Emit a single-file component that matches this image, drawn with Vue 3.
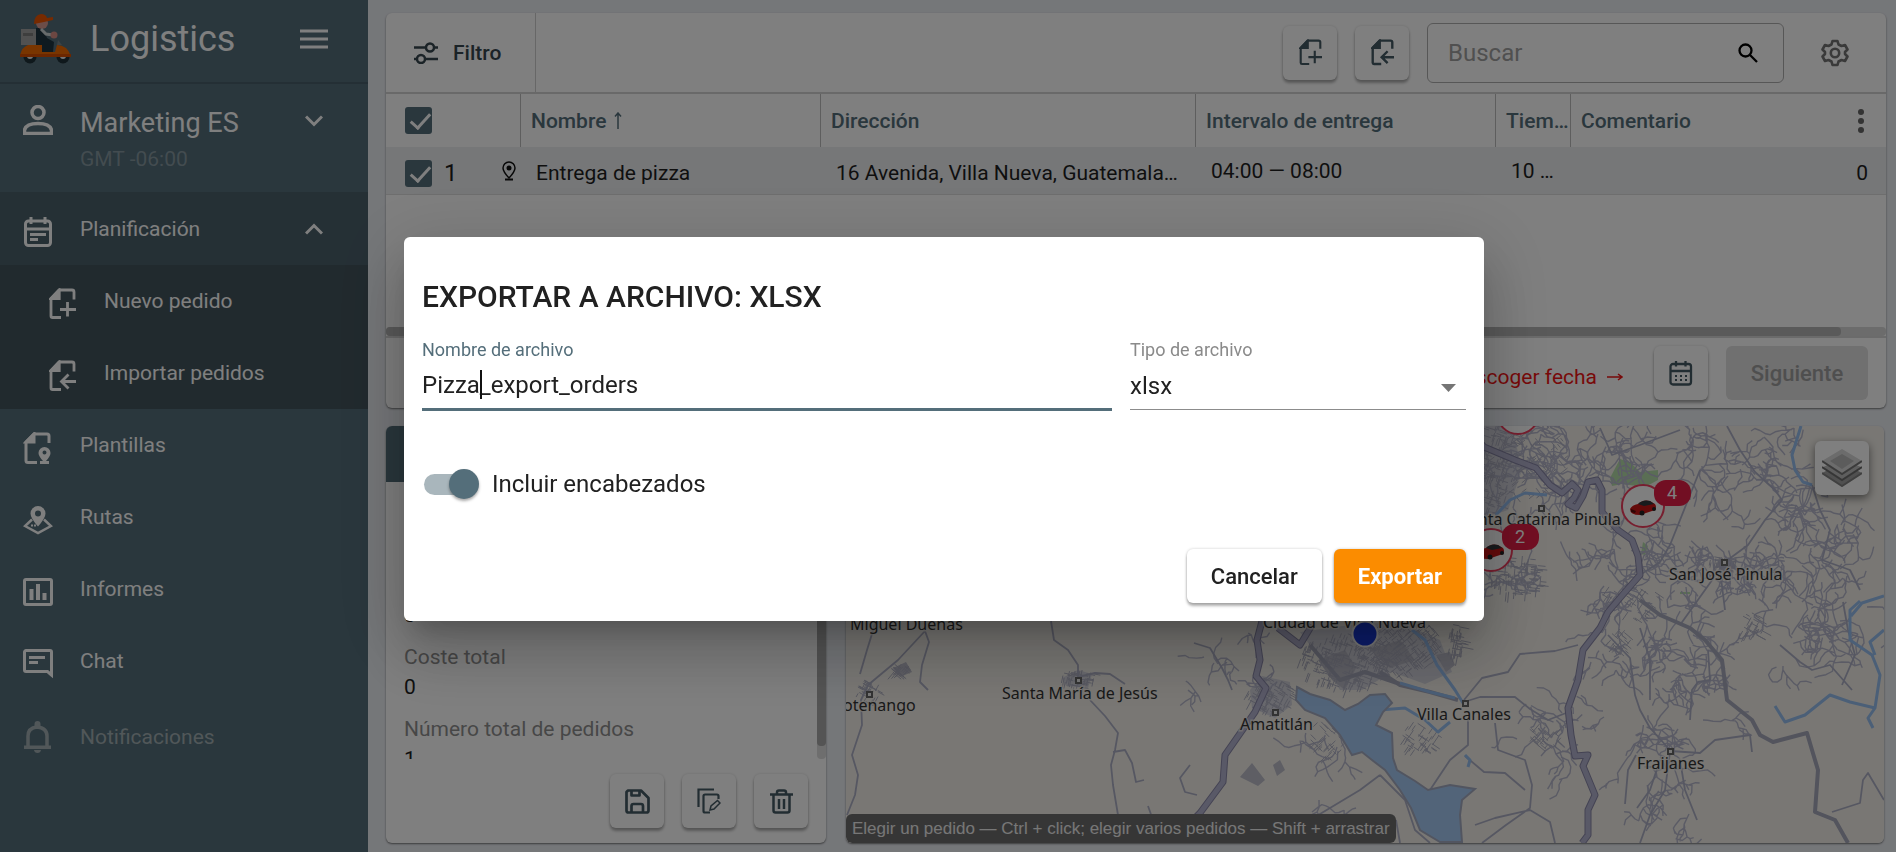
<script setup>
import { ref } from 'vue'

const icons = {
  docPlus: 'M6 29H3.5A1.5 1.5 0 0 1 2 27.500V10L10 1.500H23A2 2 0 0 1 25 3.500V11 M2 10H10V2 M6 29H12 M18.500 13.500V28 M11 21H27',
  docImport: 'M6 29H3.5A1.5 1.5 0 0 1 2 27.500V10L10 1.500H23A2 2 0 0 1 25 3.500V11 M2 10H10V2 M6 29H12 M12 21H27 M19.500 14L12.500 21L19.500 28',
}

const columns = ['Nombre', 'Dirección', 'Intervalo de entrega', 'Tiem…', 'Comentario']
const fileName = ref('Pizza_export_orders')
const fileType = ref('xlsx')
const withHeaders = ref(true)
const search = ref('')

let seed = 7
function rnd() {
  seed = (seed * 16807) % 2147483647
  return seed / 2147483647
}

// Winding side road that forks as it goes.
function road(x, y, angle, steps, out, depth = 0) {
  let d = `M${Math.round(x)} ${Math.round(y)}`
  for (let i = 0; i < steps; i++) {
    angle += (rnd() - 0.5) * 1.8
    const len = 3 + rnd() * 5
    x += Math.cos(angle) * len
    y += Math.sin(angle) * len
    d += `L${x.toFixed(1)} ${y.toFixed(1)}`
    if (depth < 2 && rnd() < 0.28) {
      road(x, y, angle + (rnd() < 0.5 ? -1.3 : 1.3), Math.round(steps * 0.5), out, depth + 1)
    }
  }
  out.push(d)
}

function network(areas) {
  const out = []
  for (const [x, y, w, h, n, steps] of areas) {
    for (let i = 0; i < n; i++) {
      road(x + rnd() * w, y + rnd() * h, rnd() * 6.28, steps, out)
    }
  }
  return out.join('')
}

// Short crossing streets of built-up places.
function streets(areas) {
  let d = ''
  for (const [cx, cy, rx, ry, n, tilt] of areas) {
    for (let i = 0; i < n; i++) {
      const t = rnd() * 6.28
      const r = Math.sqrt(rnd())
      const x = cx + Math.cos(t) * r * rx
      const y = cy + Math.sin(t) * r * ry
      const a = tilt + (rnd() < 0.5 ? 0 : 1.57)
      const l = 4 + rnd() * 7
      d += `M${x.toFixed(1)} ${y.toFixed(1)}l${(Math.cos(a) * l).toFixed(1)} ${(Math.sin(a) * l).toFixed(1)}`
    }
  }
  return d
}

const sideRoads = network([
  [1490, 430, 150, 60, 26, 9],
  [1650, 430, 90, 60, 9, 9],
  [1730, 430, 60, 50, 6, 8],
  [1600, 520, 130, 80, 20, 9],
  [1740, 480, 120, 110, 20, 9],
  [1510, 520, 80, 80, 9, 8],
  [1780, 590, 90, 80, 14, 9],
  [1600, 610, 110, 90, 16, 8],
  [1630, 690, 80, 80, 11, 8],
  [1640, 770, 60, 55, 5, 8],
  [1500, 700, 80, 60, 8, 7],
  [1290, 740, 70, 80, 7, 7],
  [1200, 650, 70, 60, 8, 5],
  [1590, 660, 20, 60, 6, 4],
])

const thinStreets = streets([
  [1490, 450, 28, 60, 200, 0.3],
  [1530, 460, 40, 40, 70, 0.9],
  [1515, 575, 28, 20, 100, 0.1],
  [1630, 600, 30, 20, 40, 0.6],
  [1724, 563, 16, 9, 30, 0.2],
  [1345, 660, 45, 28, 230, 0.35],
  [1400, 645, 42, 28, 240, 0.9],
  [1270, 695, 22, 18, 90, 0.5],
  [1078, 678, 17, 10, 45, 0.2],
  [868, 690, 12, 12, 34, 0.5],
  [900, 668, 10, 6, 26, 0.7],
  [1420, 735, 20, 16, 40, 0.6],
  [1330, 738, 20, 20, 40, 0.8],
  [1620, 640, 12, 12, 30, 0.7],
  [1752, 625, 12, 16, 30, 0.5],
  [1545, 735, 20, 12, 30, 0.7],
  [1456, 640, 8, 18, 40, 0.2],
])

const places = [
  { x: 850, y: 630, name: 'Miguel Dueñas' },
  { x: 843, y: 711, name: 'otenango' },
  { x: 1002, y: 699, name: 'Santa María de Jesús' },
  { x: 1240, y: 730, name: 'Amatitlán' },
  { x: 1263, y: 628, name: 'Ciudad de Villa Nueva' },
  { x: 1417, y: 720, name: 'Villa Canales' },
  { x: 1637, y: 769, name: 'Fraijanes' },
  { x: 1460, y: 525, name: 'Santa Catarina Pinula' },
  { x: 1669, y: 580, name: 'San José Pinula' },
]
const towns = [[869, 694], [1078, 680], [1275, 712], [1465, 703], [1670, 751], [1541, 508], [1724, 562]]
const clusters = [
  { x: 1643, y: 506, count: 4 },
  { x: 1491, y: 550, count: 2 },
]
</script>

<template>
  <div class="app">
    <aside class="sidebar">
      <header class="brand">
        <svg class="scooter" viewBox="0 0 52 50" aria-hidden="true">
          <circle cx="10" cy="43" r="6.500" fill="#1e3038" /><circle cx="43" cy="43" r="6.500" fill="#1e3038" />
          <circle cx="10" cy="42" r="3" fill="#e8e8e8" /><circle cx="43" cy="42" r="3" fill="#e8e8e8" />
          <path d="M0 41Q2 33 8 31H22L25 38H35L37 31Q47 31 51 42H0Z" fill="#f26a00" />
          <path d="M0 40H51V43H0Z" fill="#d94e00" />
          <rect x="1" y="15" width="15" height="16" fill="#a2a2a2" /><rect x="3" y="19" width="10" height="3" fill="#7c7c7c" />
          <path d="M16 14L23 14L27 24L34 28L33 38H22V31H16Z" fill="#1e3440" />
          <circle cx="22" cy="9" r="6" fill="#d99a90" />
          <path d="M14 10Q14 1 21 0Q26 0 27 4L33 3L33 6L24 8Z" fill="#ee5400" />
          <path d="M21 15L26 20L33 21" fill="none" stroke="#cfd6d8" stroke-width="3" />
          <circle cx="34" cy="21" r="3.500" fill="#d98e84" />
          <path d="M38 26L42 31H37Z" fill="#76868c" />
        </svg>
        <h1>Logistics</h1>
        <button class="plain" aria-label="Menú">
          <svg width="28" height="20" viewBox="0 0 28 20"><path d="M0 2H28M0 10H28M0 18H28" stroke="currentColor" stroke-width="3" /></svg>
        </button>
      </header>

      <section class="account">
        <svg width="30" height="30" viewBox="0 0 30 30" fill="none" stroke="currentColor" stroke-width="3.500"><circle cx="15" cy="7.500" r="6" /><path d="M1.500 28.500V25Q3 18.500 15 18.500Q27 18.500 28.500 25V28.500Z" /></svg>
        <div>
          <strong>Marketing ES</strong>
          <small>GMT -06:00</small>
        </div>
        <button class="plain" aria-label="Cuenta">
          <svg width="18" height="12" viewBox="0 0 18 12"><path d="M1 1.500L9 9.500L17 1.500" fill="none" stroke="currentColor" stroke-width="3" /></svg>
        </button>
      </section>

      <nav>
        <a href="#" class="item open">
          <svg width="30" height="30" viewBox="0 0 30 30" fill="none" stroke="currentColor" stroke-width="3"><rect x="2.500" y="4" width="25" height="24.500" rx="3" /><path d="M3 12H27M8 0V7M22 0V7" /><path d="M7 17.500H23M7 22.500H15" /></svg>
          <span>Planificación</span>
          <svg class="chev" width="18" height="12" viewBox="0 0 18 12"><path d="M1 10.500L9 2.500L17 10.500" fill="none" stroke="currentColor" stroke-width="3" /></svg>
        </a>
        <div class="sub">
          <a href="#" class="item"><svg width="27" height="32" viewBox="0 0 27 31" fill="none" stroke="currentColor" stroke-width="2.800"><path d="M2 10L10 2V10Z" fill="currentColor" /><path :d="icons.docPlus" /></svg><span>Nuevo pedido</span></a>
          <a href="#" class="item"><svg width="27" height="32" viewBox="0 0 27 31" fill="none" stroke="currentColor" stroke-width="2.800"><path d="M2 10L10 2V10Z" fill="currentColor" /><path :d="icons.docImport" /></svg><span>Importar pedidos</span></a>
        </div>
        <a href="#" class="item">
          <svg width="30" height="32" viewBox="0 0 30 32" fill="none" stroke="currentColor" stroke-width="3"><path d="M3 10L11 2V10Z" fill="currentColor" /><path d="M14 30.500H5A2 2 0 0 1 3 28.500V10L11 2H24A2 2 0 0 1 26 4V11" /><path fill-rule="evenodd" stroke="none" fill="currentColor" d="M21.500 15A6 6 0 0 0 15.500 21Q15.500 24 20 29H17V32H26V29H23Q27.500 24 27.500 21A6 6 0 0 0 21.500 15ZM21.500 18.500A2 2 0 1 1 21.500 22.500A2 2 0 1 1 21.500 18.500Z" /></svg>
          <span>Plantillas</span>
        </a>
        <a href="#" class="item">
          <svg width="30" height="29" viewBox="0 0 30 29"><path d="M9 13.500L2 20L15 27L28 20L21 13.500" fill="none" stroke="currentColor" stroke-width="2.500" /><path d="M8 19.500H13" stroke="currentColor" stroke-width="2" stroke-dasharray="2 1" /><path fill-rule="evenodd" fill="currentColor" d="M15 0A7.500 7.500 0 0 0 7.500 7.500Q7.500 12 15 20.500Q22.500 12 22.500 7.500A7.500 7.500 0 0 0 15 0ZM15 4.500A3 3 0 1 1 15 10.500A3 3 0 1 1 15 4.500Z" /></svg>
          <span>Rutas</span>
        </a>
        <a href="#" class="item">
          <svg width="30" height="28" viewBox="0 0 30 28" fill="none" stroke="currentColor"><rect x="1.500" y="1.500" width="27" height="25" rx="1.500" stroke-width="3" /><path d="M8.500 11V22M15 6V22M21.500 15V22" stroke-width="4" /></svg>
          <span>Informes</span>
        </a>
        <a href="#" class="item">
          <svg width="30" height="30" viewBox="0 0 30 30" fill="none" stroke="currentColor" stroke-width="3"><path d="M28.500 26L24.500 22.500H3A1.500 1.500 0 0 1 1.500 21V3A1.500 1.500 0 0 1 3 1.500H27A1.500 1.500 0 0 1 28.500 3Z" /><path d="M6 8.500H22M6 13.500H15" /></svg>
          <span>Chat</span>
        </a>
        <a href="#" class="item muted">
          <svg width="30" height="32" viewBox="0 0 30 32"><path d="M5 26V15Q5 7 14 6Q24 7 24 15V26" fill="none" stroke="currentColor" stroke-width="3.500" /><path d="M1 24.500H28V28H1ZM11.500 3A3 3 0 0 1 17.500 3V6H11.500ZM11 29H18Q17.500 32 14.500 32Q11.500 32 11 29Z" fill="currentColor" /></svg>
          <span>Notificaciones</span>
        </a>
      </nav>
    </aside>

    <main>
      <section class="card orders">
        <div class="toolbar">
          <button class="filter">
            <svg width="24" height="22" viewBox="0 0 24 22" fill="none" stroke="currentColor" stroke-width="2.500"><path d="M0 5.500H12M20 5.500H24M0 17H3M11 17H24" /><circle cx="16" cy="5.500" r="4" /><circle cx="7" cy="17" r="4" /></svg>
            Filtro
          </button>
          <div class="tools">
            <button class="square" aria-label="Nuevo pedido"><svg width="23" height="27" viewBox="0 0 27 31" fill="none" stroke="currentColor" stroke-width="2.500"><path d="M2 10L10 2V10Z" fill="currentColor" /><path :d="icons.docPlus" /></svg></button>
            <button class="square" aria-label="Importar pedidos"><svg width="23" height="27" viewBox="0 0 27 31" fill="none" stroke="currentColor" stroke-width="2.800"><path d="M2 10L10 2V10Z" fill="currentColor" /><path :d="icons.docImport" /></svg></button>
            <label class="search">
              <input v-model="search" type="search" placeholder="Buscar" aria-label="Buscar">
              <svg width="20" height="20" viewBox="0 0 20 20" fill="none" stroke="#000" stroke-width="2.300"><circle cx="7.500" cy="7.500" r="6" /><path d="M12 12L19 19" /></svg>
            </label>
            <button class="plain gear" aria-label="Ajustes">
              <svg width="28" height="28" viewBox="0 0 28 28" fill="none" stroke="currentColor" stroke-width="2.600" stroke-linejoin="round"><path d="M11.500 2H16.500L17.500 5.500L20.500 7L24 6L26.500 10.500L24 13V15L26.500 17.500L24 22L20.500 21L17.500 22.500L16.500 26H11.500L10.500 22.500L7.500 21L4 22L1.500 17.500L4 15V13L1.500 10.500L4 6L7.500 7L10.500 5.500Z" /><circle cx="14" cy="14" r="4.200" /></svg>
            </button>
          </div>
        </div>

        <table>
          <colgroup><col class="c-check"><col class="c-name"><col class="c-address"><col class="c-interval"><col class="c-time"><col></colgroup>
          <thead>
            <tr>
              <th><input type="checkbox" class="check" checked aria-label="Seleccionar todo"></th>
              <th v-for="(c, i) in columns" :key="c">
                <div class="head"><span>{{ c }}</span><svg v-if="i === 0" width="8" height="17" viewBox="0 0 8 17" fill="none" stroke="currentColor" stroke-width="1.500"><path d="M4 17V1M1 4.500L4 1L7 4.500" /></svg>
                  <button v-if="i === 4" class="plain dots" aria-label="Columnas"><svg width="6" height="24" viewBox="0 0 6 24" fill="currentColor"><circle cx="3" cy="3" r="3" /><circle cx="3" cy="12" r="3" /><circle cx="3" cy="21" r="3" /></svg></button>
                </div>
              </th>
            </tr>
          </thead>
          <tbody>
            <tr>
              <td class="low">
                <div class="lead"><input type="checkbox" class="check" checked aria-label="Seleccionar pedido 1"><span>1</span>
                  <svg width="14" height="20" viewBox="0 0 14 20" fill="none" stroke="#111" stroke-width="1.500"><path d="M7 17Q1 10.500 1 7A6 6 0 0 1 13 7Q13 10.500 7 17Z" /><circle cx="7" cy="7" r="2.500" fill="#111" stroke="none" /><path d="M3 18.500H11" stroke-width="2" /></svg>
                </div>
              </td>
              <td class="low">Entrega de pizza</td>
              <td class="low">16 Avenida, Villa Nueva, Guatemala…</td>
              <td>04:00 — 08:00</td>
              <td>10 …</td>
              <td class="low num">0</td>
            </tr>
          </tbody>
        </table>
        <div class="blank"></div>
        <div class="hscroll"><span></span></div>
        <footer>
          <span class="warn">Escoger fecha <svg width="16" height="8" viewBox="0 0 16 8" fill="none" stroke="currentColor" stroke-width="1.500"><path d="M0 4H15M11 1L15 4L11 7" /></svg></span>
          <button class="square" aria-label="Calendario">
            <svg width="24" height="25" viewBox="0 0 24 25" fill="none" stroke="currentColor" stroke-width="2.300"><rect x="1.500" y="3" width="20.500" height="20.500" rx="2.500" /><path d="M2 10H22M7 0V5.500M16.500 0V5.500" /><path d="M6 15H8M11 15H13M16 15H18M6 19H8M11 19H13M16 19H18" stroke-width="2" /></svg>
          </button>
          <button class="next" disabled>Siguiente</button>
        </footer>
      </section>

      <div class="lower">
        <section class="card route">
          <div class="bar"></div>
          <div class="stats">
            <dl>
              <dd>0</dd>
              <dt>Coste total</dt><dd>0</dd>
              <dt>Número total de pedidos</dt><dd>1</dd>
            </dl>
            <div class="vscroll"><span></span></div>
          </div>
          <div class="actions">
            <button class="square" aria-label="Guardar"><svg width="25" height="25" viewBox="0 0 25 25" fill="none" stroke="currentColor" stroke-width="2.700" stroke-linejoin="round"><path d="M3 1.500H16L23.500 9V21.500A2 2 0 0 1 21.500 23.500H3.500A2 2 0 0 1 1.500 21.500V3Z" /><path d="M6.500 2V6.500H14.500V2M6.500 23V17A2 2 0 0 1 8.500 15H16A2 2 0 0 1 18 17V23" /></svg></button>
            <button class="square" aria-label="Duplicar"><svg width="24" height="26" viewBox="0 0 24 26" fill="none" stroke="currentColor" stroke-width="2.200"><path d="M1.500 19V1.500H17M13 24.500H8A1.500 1.500 0 0 1 6.500 23V8A1.500 1.500 0 0 1 8 6.500H20A1.500 1.500 0 0 1 21.500 8V11" /><path d="M13 22L14 18L20.500 12.500L23 15L17 21Z" stroke-width="1.500" /></svg></button>
            <button class="square" aria-label="Eliminar"><svg width="23" height="25" viewBox="0 0 23 25" fill="none" stroke="currentColor" stroke-width="2.500"><path d="M0 5.500H23M7 5V3.500A2 2 0 0 1 9 1.500H14A2 2 0 0 1 16 3.500V5M3.500 6V21.500A2 2 0 0 0 5.500 23.500H17.500A2 2 0 0 0 19.500 21.500V6M9 10V20M14 10V20" /></svg></button>
          </div>
        </section>

        <section class="map">
          <svg class="canvas" viewBox="846 426 1038 417" preserveAspectRatio="xMidYMid slice">
            <rect x="846" y="426" width="1038" height="417" fill="#f2efe9" />
            <g fill="#d3d3dc"><path d="M1460 426H1512L1522 470L1508 510L1478 520L1460 500ZM1300 632L1350 625L1400 622L1440 640L1452 672L1425 684L1392 672L1362 690L1340 690L1325 665ZM1250 690L1262 676L1290 682L1292 705L1275 718L1252 708ZM1062 678L1078 670L1092 674L1088 688L1066 686Z" /></g>
            <g fill="#bcbcc8"><path d="M1240 777L1252 763L1265 780L1258 786ZM1273 765L1280 760L1285 770L1277 776ZM893 668L906 662L912 672L900 677ZM1715 563L1730 558L1738 568L1722 572ZM1318 660L1345 650L1356 668L1345 690L1332 680ZM1370 650L1400 640L1415 660L1390 668ZM1436 655L1450 652L1455 665L1446 672Z" /></g>
            <path fill="#b4dca8" d="M1610 478L1620 459L1630 462L1640 472L1658 470L1658 480L1645 487L1622 484L1612 486ZM1643 542L1648 546L1645 555L1641 554ZM1680 592H1690V594H1680Z" />
            <path :d="sideRoads" fill="none" stroke="#b6b7cb" stroke-width="1.400" stroke-linejoin="round" />
            <path :d="thinStreets" fill="none" stroke="#b0b1c2" stroke-width="1" />
            <g fill="none" stroke="#adafc4" stroke-width="1.800" stroke-linejoin="round">
              <path d="M876 621L867 650L860 674M925 631L898 660L868 685L861 700L862 725L852 755L858 775L855 795L847 815M925 631L929 642L922 665L920 682L928 690M1051 621L1054 640L1068 650L1078 665L1078 680M1078 677L1095 673L1110 674L1125 684M1090 700L1105 716L1118 733L1115 750L1111 765L1113 785L1118 815L1117 843M1113 752L1125 750L1132 763L1136 782L1144 780M1194 643L1210 648L1222 668L1228 680L1232 690M1190 765L1180 778L1185 792L1197 795M1148 806L1153 820L1145 830" />
              <path d="M1464 700L1482 678L1508 672L1520 654L1555 651L1578 645M1464 702L1480 697L1515 697L1530 709L1548 720L1566 713M1468 718V745L1450 760L1430 790M1495 723L1498 750L1525 760L1532 785L1530 808L1506 825L1482 843M1465 756L1484 772L1505 773L1525 790M1475 825L1495 818L1530 810L1550 822L1555 843" />
              <path d="M1608 635L1630 658L1635 695L1640 710L1650 728L1670 750M1670 751L1700 753L1715 740L1750 735L1752 752M1640 628L1650 660L1650 700M1690 720L1692 690L1698 682L1710 680L1708 650M1670 752L1665 790L1650 815L1640 843M1680 760L1685 790L1697 820M1625 804L1628 770L1636 755M1637 808L1650 790L1660 760M1380 775L1360 790L1310 820M1396 820L1400 843M1380 775L1405 800L1415 830L1430 843" />
              <path d="M1727 426L1740 450L1755 472L1775 490L1782 500L1765 520L1748 545L1725 562M1725 562L1705 590L1680 625M1812 485L1820 510L1830 530L1822 560L1850 570L1860 590M1720 570L1725 610M1640 575L1660 562L1670 545L1688 500L1700 470M1600 428L1612 455L1640 445L1680 430M1843 602L1848 630L1855 655L1842 685M1780 645L1800 662L1812 670L1830 665L1852 690M1832 812L1860 803L1863 780L1868 773L1884 800" />
            </g>
            <g fill="none" stroke="#a6a8ba" stroke-width="4" stroke-linejoin="round">
              <path d="M1640 600L1660 615L1690 628L1705 640L1722 660L1727 700L1752 720L1760 735L1773 742L1807 733L1812 750L1818 770L1815 812L1835 820L1848 843M1380 672L1400 685L1430 692L1458 700M1310 645L1340 680L1365 672L1400 684" />
            </g>
            <g fill="none" stroke="#96beef" stroke-width="3" stroke-linejoin="round">
              <path d="M1412 630L1425 640L1437 665L1455 690L1463 703M1400 683L1430 692L1455 698M1875 708L1850 702L1830 695L1805 715L1785 722L1775 706M1860 601L1850 610L1850 640L1872 655L1880 675L1875 708L1868 718L1873 728M1884 630L1870 642L1875 655M1801 426L1792 455L1795 470L1803 482L1812 485M1884 596L1862 603L1851 616M1496 515L1510 500L1525 493L1547 495M1380 710L1405 708L1425 720L1438 732L1450 722M1465 755L1470 760L1468 767" />
            </g>
            <path fill="#a5c9f3" stroke="#a4abc0" stroke-width="2" d="M1297 687L1310 694L1330 700L1345 710L1358 704L1370 695L1385 694L1392 703L1383 712L1376 725L1392 733L1393 758L1397 770L1415 781L1428 790L1450 785L1475 789L1462 800L1460 815L1462 842H1440L1420 830L1411 808L1400 790L1385 770L1372 760L1362 752L1352 755L1340 735L1325 718L1305 710L1296 700Z" />
            <g fill="none" stroke-linejoin="round">
              <g v-for="[color, width] in [['#8886a6', 7], ['#b3b2ce', 5]]" :key="color" :stroke="color" :stroke-width="width">
                <path d="M1478 440L1484 447L1515 460L1536 468L1550 485L1562 493L1572 484L1578 490L1574 498L1568 504L1576 508L1583 496L1588 482L1597 480L1602 490L1602 512L1618 530L1632 540L1638 556L1640 575L1625 592L1608 612L1600 628L1583 650L1578 680L1568 708L1571 735L1575 756L1588 755L1583 766L1595 795L1588 810V835L1582 843" />
                <path d="M1262 600V621L1257 640L1260 660L1256 676L1266 688L1255 712L1225 755L1223 782L1200 813L1170 843M1278 628L1300 645L1312 625" />
              </g>
            </g>
            <g class="towns"><rect v-for="[x, y] in towns" :key="x" :x="x - 2" :y="y - 2" width="5" height="5" /></g>
            <g class="places"><text v-for="p in places" :key="p.name" :x="p.x" :y="p.y">{{ p.name }}</text></g>
            <circle cx="1365" cy="634" r="12.500" fill="#1738d8" stroke="#eee" stroke-width="2" />
            <circle cx="1518" cy="413" r="21" fill="#fff" stroke="#ef3e5e" stroke-width="2" />
            <g v-for="c in clusters" :key="c.count">
              <circle :cx="c.x" :cy="c.y" r="21" fill="#fff" stroke="#ef3e5e" stroke-width="2" />
              <g :transform="`translate(${c.x - 13} ${c.y - 6})`">
                <path d="M0 9Q2 5 8 4Q13 -1 20 1L25 4Q27 7 25 10L10 15Q0 15 0 9Z" fill="#c91414" />
                <path d="M8 4Q13 -1 20 1L24 4L14 6Z" fill="#30363b" /><circle cx="12" cy="13" r="2.500" fill="#222" /><circle cx="24" cy="9" r="2" fill="#222" /><path d="M1 9L6 11L5 13L1 12Z" fill="#5c0808" />
              </g>
              <rect :x="c.x + 11" :y="c.y - 26" width="37" height="26" rx="12" fill="#e41e46" />
              <text class="count" :x="c.x + 29" :y="c.y - 7">{{ c.count }}</text>
            </g>
          </svg>
          <button class="layers" aria-label="Capas">
            <svg width="40" height="38" viewBox="0 0 40 38"><path d="M0 24L20 37L40 24L20 14Z" fill="#a0a0a0" /><path d="M0 24L20 37L40 24" fill="none" stroke="#808080" stroke-width="2" /><path d="M0 18L20 31L40 18L20 9Z" fill="#bdbdbd" stroke="#fff" /><path d="M0 18L20 31L40 18" fill="none" stroke="#6d6d6d" stroke-width="2" /><path d="M0 12L20 25L40 12L20 0Z" fill="#d8d8d8" /><path d="M8 12L20 5L32 12L20 20Z" fill="#b8b8b8" /><path d="M0 12L20 25L40 12" fill="none" stroke="#777" stroke-width="2" /></svg>
          </button>
          <p class="hint">Elegir un pedido — Ctrl + click; elegir varios pedidos — Shift + arrastrar</p>
        </section>
      </div>
    </main>

    <div class="overlay">
      <form class="dialog" role="dialog" aria-labelledby="export-title" @submit.prevent>
        <h2 id="export-title">EXPORTAR A ARCHIVO: XLSX</h2>
        <div class="fields">
          <div class="field active">
            <label for="file-name">Nombre de archivo</label>
            <input id="file-name" v-model="fileName" type="text">
            <span class="caret"></span>
          </div>
          <div class="field">
            <label for="file-type">Tipo de archivo</label>
            <select id="file-type" v-model="fileType"><option>xlsx</option></select>
            <svg class="arrow" width="15" height="8" viewBox="0 0 15 8"><path d="M0 0H15L7.500 8Z" fill="#757575" /></svg>
          </div>
        </div>
        <label class="switch"><input v-model="withHeaders" type="checkbox" role="switch"><span>Incluir encabezados</span></label>
        <div class="buttons">
          <button type="button">Cancelar</button>
          <button type="submit" class="primary">Exportar</button>
        </div>
      </form>
    </div>
  </div>
</template>

<style>
body { background: #ebeef3; overflow: hidden; }
</style>

<style scoped>
.app, .app * { box-sizing: border-box; }
.app {
  display: grid;
  grid-template-columns: 368px minmax(0, 1fr);
  height: 100vh;
  font-family: Roboto, "Liberation Sans", sans-serif;
  font-size: 21px;
  color: #1f1f1f;
  background: #ebeef3;
}
button, input, select { font: inherit; color: inherit; }
button { border: 0; background: none; padding: 0; }
svg { display: block; flex: none; }
h1, h2, p, dl, dd { margin: 0; }

.sidebar { background: #546e7a; color: #fff; }
.brand { display: flex; align-items: center; height: 84px; padding: 0 40px 4px 20px; border-bottom: 2px solid #485f6a; }
.scooter { width: 52px; height: 50px; }
.brand h1 { flex: 1; margin-left: 18px; font-size: 36px; font-weight: 400; }
.account { display: flex; align-items: flex-start; height: 108px; padding: 21px 45px 0 23px; }
.account div { flex: 1; margin-left: 27px; }
.account strong { display: block; font-size: 27px; font-weight: 400; line-height: 36px; }
.account small { display: block; font-size: 21px; line-height: 36px; color: #8698a0; }
.account button { margin-top: 10px; }
.item { display: flex; align-items: center; height: 72px; padding: 0 45px 0 23px; color: #fff; text-decoration: none; }
.item > svg:first-child { margin-top: 6px; }
.item span { flex: 1; margin-left: 27px; }
.item.open { height: 73px; background: #4b606b; }
.sub { background: #43545c; }
.sub .item { padding-left: 49px; }
.sub .item span { margin-left: 28px; }
.item.muted { height: 80px; color: #a2aeb3; }
.item.muted > svg:first-child { margin-top: 0; }

main { display: flex; flex-direction: column; gap: 18px; min-width: 0; padding: 13px 10px 9px 18px; }
.card { background: #fff; border-radius: 6px; box-shadow: 0 1px 2px rgba(0, 0, 0, .5); overflow: hidden; }
.toolbar { display: flex; justify-content: space-between; height: 81px; border-bottom: 2px solid #d2d2d2; }
.filter { display: flex; align-items: center; gap: 15px; width: 150px; padding: 0 28px; border-right: 1px solid #cecece; font-weight: 500; color: #37474f; }
.tools { display: flex; align-items: center; gap: 18px; padding-right: 37px; }
.square { display: flex; align-items: center; justify-content: center; width: 54px; height: 54px; border-radius: 6px; background: #fff; color: #455a64; box-shadow: 0 3px 3px rgba(0, 0, 0, .3), 0 0 3px rgba(0, 0, 0, .15); }
.search { display: flex; align-items: center; justify-content: space-between; width: 357px; height: 60px; padding: 0 25px 0 20px; border: 1px solid #aeaeae; border-radius: 6px; }
.search input { flex: 1; min-width: 0; padding: 0; border: 0; outline: 0; background: none; font-size: 24px; }
.search input::placeholder { color: #a0a0a0; opacity: 1; }
.gear { margin-left: 19px; color: #757575; }

table { width: 100%; table-layout: fixed; border-collapse: separate; border-spacing: 0; }
.c-check { width: 135px; }
.c-name, .c-interval { width: 300px; }
.c-address { width: 375px; }
.c-time { width: 75px; }
th { height: 53px; padding: 0 0 0 10px; border-right: 1px solid #bdbdbd; color: #546e7a; font-weight: 500; text-align: left; }
th:first-child { padding-left: 19px; }
th:last-child { border-right: 0; }
.head { display: flex; align-items: center; gap: 8px; }
.dots { margin: 0 22px 0 auto; color: #666; }
td { height: 48px; padding: 0 8px 0 15px; overflow: hidden; background: #eceef1; border-bottom: 1px solid #dcdcdc; white-space: nowrap; text-overflow: ellipsis; }
td.low { padding-top: 5px; }
td:first-child { padding-left: 19px; padding-right: 5px; }
td.num { text-align: right; padding-right: 18px; }
.lead { display: flex; align-items: center; }
.lead span { flex: 1; margin-left: 12px; font-size: 24px; }
.lead > svg { margin-bottom: 5px; }
.check { display: block; position: relative; width: 27px; height: 27px; margin: 0; appearance: none; border-radius: 3px; background: #546e7a; }
.check::after { content: ""; position: absolute; left: 10px; top: 2px; width: 8px; height: 17px; border: solid #fff; border-width: 0 3px 3px 0; transform: rotate(42deg); }
.blank { height: 132px; }
.hscroll { height: 9px; background: #d8d8d8; border-radius: 4px; }
.hscroll span { display: block; width: 97%; height: 9px; border-radius: 4px; background: #b5b5b5; }
.orders footer { display: flex; align-items: center; justify-content: flex-end; gap: 18px; height: 72px; padding-right: 18px; border-top: 2px solid #d6d6d6; }
.warn { display: flex; align-items: center; gap: 10px; margin: 7px 13px 0 0; color: #f01414; }
.next { width: 142px; height: 54px; border-radius: 6px; background: #e0e0e0; color: #9e9e9e; font-size: 22px; font-weight: 500; }

.lower { display: grid; grid-template-columns: 440px minmax(0, 1fr); gap: 20px; flex: 1; min-height: 0; padding-right: 2px; }
.route { display: flex; flex-direction: column; }
.bar { height: 56px; background: #546e7a; }
.stats { display: flex; flex: 1; align-items: flex-end; min-height: 0; overflow: hidden; }
dl { flex: 1; padding-left: 18px; margin-bottom: -15px; }
dt, dd { line-height: 30px; }
dt { padding-top: 12px; color: #8f8f8f; }
.vscroll { align-self: stretch; width: 9px; padding-bottom: 13px; background: #dcdcdc; border-radius: 4px; }
.vscroll span { display: block; height: 100%; background: #a8a8a8; border-radius: 4px; }
.actions { display: flex; justify-content: flex-end; gap: 18px; padding: 15px 18px; }
.map { position: relative; overflow: hidden; border-radius: 6px; box-shadow: 0 1px 2px rgba(0, 0, 0, .5); }
.canvas { width: 100%; height: 100%; }
.towns rect { fill: #eee; stroke: #666; stroke-width: 2px; }
.places text { font-family: "Noto Sans", sans-serif; font-size: 16px; fill: #333; stroke: #f2efe9; stroke-width: 3px; stroke-opacity: .7; paint-order: stroke; }
.count { font-size: 18px; fill: #fff; text-anchor: middle; }
.layers { position: absolute; top: 15px; right: 15px; display: grid; place-items: center; width: 54px; height: 54px; border-radius: 6px; background: #fff; box-shadow: 0 3px 9px rgba(0, 0, 0, .5); }
.hint { position: absolute; left: 0; bottom: 0; padding: 0 6px; border-radius: 6px; background: #6c6c6c; color: #eee; font: 17px/29px "Liberation Sans", sans-serif; }

.overlay { position: fixed; inset: 0; display: flex; align-items: center; justify-content: center; padding: 6px 8px 0 0; background: rgba(0, 0, 0, .5); }
.dialog { width: 1080px; max-width: 95vw; padding: 36px 18px 18px; border-radius: 6px; background: #fff; color: #212121; box-shadow: 0 17px 23px -10px rgba(0, 0, 0, .2), 0 36px 57px 5px rgba(0, 0, 0, .14), 0 14px 69px 12px rgba(0, 0, 0, .12); }
.dialog h2 { font-size: 30px; font-weight: 500; line-height: 48px; }
.fields { display: grid; grid-template-columns: 690fr 336fr; gap: 18px; margin-top: 17px; }
.field { position: relative; }
.field label { display: block; font-size: 18px; line-height: 24px; color: #8a8a8a; }
.field input, .field select { display: block; width: 100%; height: 48px; margin: 0; padding: 0; border: 0; border-bottom: 1px solid #8c8c8c; border-radius: 0; outline: 0; appearance: none; background: none; font-size: 24px; }
.field.active label { color: #546e7a; }
.field.active input { border-bottom: 3px solid #546e7a; height: 49px; }
.caret { position: absolute; left: 58px; top: 32px; width: 2px; height: 29px; background: #111; }
.arrow { position: absolute; right: 10px; top: 46px; }
.switch { display: flex; align-items: center; gap: 13px; width: max-content; height: 36px; margin-top: 55px; font-size: 24px; }
.switch input { position: relative; width: 55px; height: 30px; margin: 0 0 0 2px; appearance: none; }
.switch input::before { content: ""; position: absolute; inset: 5px 4px 4px 0; border-radius: 11px; background: #a9b6bc; }
.switch input::after { content: ""; position: absolute; right: 0; top: 0; width: 30px; height: 30px; border-radius: 50%; background: #546e7a; box-shadow: 0 2px 3px rgba(0, 0, 0, .35); }
.buttons { display: flex; justify-content: flex-end; gap: 12px; margin-top: 47px; }
.buttons button { height: 54px; padding: 0 24px; border-radius: 6px; background: #fff; font-size: 22px; font-weight: 500; box-shadow: 0 3px 3px rgba(0, 0, 0, .3), 0 0 3px rgba(0, 0, 0, .2); }
.buttons .primary { background: #fb8c00; color: #fff; font-weight: 700; }
</style>
